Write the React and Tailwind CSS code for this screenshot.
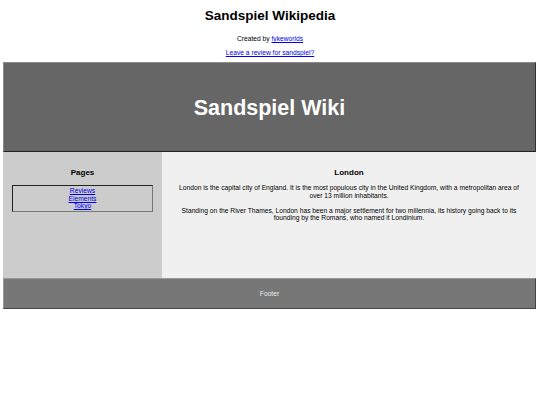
export default function App() {
  return (
    <div className="min-h-[405px] bg-white text-black" style={{ fontFamily: '"Liberation Sans", Arial, sans-serif' }}>
      {/* Title block */}
      <div className="pt-[7px] text-center">
        <h1 className="text-[13.5px] font-bold leading-[18px]">Sandspiel Wikipedia</h1>
        <p className="mt-[10px] text-[6.7px] leading-[8px]">
          Created by <a href="#" className="text-[#0000ee] underline">fykeworlds</a>
        </p>
        <p className="mt-[6px] text-[6.7px] leading-[8px]">
          <a href="#" className="text-[#0000ee] underline">Leave a review for sandspiel?</a>
        </p>
      </div>

      <div className="mx-[3px] mt-[5px] w-[533px]">
        {/* Header */}
        <div className="flex h-[90px] items-center justify-center border border-t-[#8a8a8a] border-l-[#8a8a8a] border-b-[#222] border-r-[#333] bg-[#666666] pt-[3px]">
          <h2 className="text-[21.5px] font-bold leading-none text-white">Sandspiel Wiki</h2>
        </div>

        {/* Main */}
        <div className="flex h-[126px]">
          <div className="w-[159px] bg-[#cccccc] px-[9px] pt-[16px] text-center">
            <h3 className="text-[8px] font-bold leading-[10px]">Pages</h3>
            <div className="mt-[7px] flex flex-col border border-t-[#222] border-l-[#222] border-b-[#777] border-r-[#777] py-[1px] text-[6.7px] leading-[7.6px]">
              <a href="#" className="text-[#0000ee] underline">Reviews</a>
              <a href="#" className="text-[#0000ee] underline">Elements</a>
              <a href="#" className="text-[#0000ee] underline">Tokyo</a>
            </div>
          </div>
          <div className="flex-1 bg-[#f0f0f0] px-[10px] pt-[16px] text-center">
            <h3 className="text-[8px] font-bold leading-[10px]">London</h3>
            <p className="mt-[6px] text-[6.7px] leading-[7.5px]">
              London is the capital city of England. It is the most populous city in the United Kingdom, with a metropolitan area of over 13 million inhabitants.
            </p>
            <p className="mt-[7.5px] text-[6.7px] leading-[7.5px]">
              Standing on the River Thames, London has been a major settlement for two millennia, its history going back to its founding by the Romans, who named it Londinium.
            </p>
          </div>
        </div>

        {/* Footer */}
        <div className="flex h-[31px] items-center justify-center border border-t-[#999] border-l-[#999] border-b-[#444] border-r-[#444] bg-[#777777] pt-[1px]">
          <span className="text-[6.7px] leading-none text-[#eeeeee]">Footer</span>
        </div>
      </div>
    </div>
  );
}
